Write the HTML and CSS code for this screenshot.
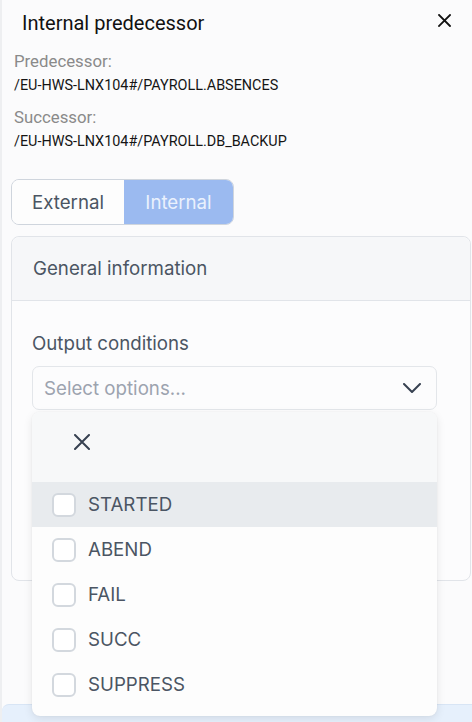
FILE: index.html
```html
<!DOCTYPE html>
<html lang="en">
<head>
<meta charset="utf-8">
<title>Internal predecessor</title>
<link rel="stylesheet" href="styles.css">
</head>
<body>
<div class="page">
  <header class="dlg-head">
    <h1 class="dlg-title">Internal predecessor</h1>
    <button class="close-btn" aria-label="Close">
      <svg width="13" height="13" viewBox="0 0 13 13"><path d="M1 1L12 12M12 1L1 12" stroke="#111" stroke-width="1.8" stroke-linecap="square" fill="none"/></svg>
    </button>
  </header>

  <dl class="meta">
    <div class="meta-item">
      <dt>Predecessor:</dt>
      <dd>/EU-HWS-LNX104#/PAYROLL.ABSENCES</dd>
    </div>
    <div class="meta-item">
      <dt>Successor:</dt>
      <dd>/EU-HWS-LNX104#/PAYROLL.DB_BACKUP</dd>
    </div>
  </dl>

  <div class="seg">
    <button class="seg-btn">External</button>
    <button class="seg-btn seg-active">Internal</button>
  </div>

  <section class="card">
    <div class="card-head">General information</div>
    <div class="card-body">
      <div class="field">
        <label class="field-label">Output conditions</label>
        <div class="select">
          <span class="placeholder">Select options...</span>
          <svg class="chev" width="18" height="10" viewBox="0 0 18 10"><path d="M1 1L9 9L17 1" stroke="#374151" stroke-width="2" fill="none" stroke-linecap="round" stroke-linejoin="round"/></svg>
        </div>
        <div class="menu">
          <div class="menu-top">
            <svg width="16" height="16" viewBox="0 0 16 16"><path d="M1 1L15 15M15 1L1 15" stroke="#374151" stroke-width="2" stroke-linecap="round" fill="none"/></svg>
          </div>
          <ul class="opts">
            <li class="opt opt-hover"><span class="cb"></span>STARTED</li>
            <li class="opt"><span class="cb"></span>ABEND</li>
            <li class="opt"><span class="cb"></span>FAIL</li>
            <li class="opt"><span class="cb"></span>SUCC</li>
            <li class="opt"><span class="cb"></span>SUPPRESS</li>
          </ul>
        </div>
      </div>
    </div>
  </section>

  <div class="footer-strip"></div>
</div>
</body>
</html>
```

FILE: styles.css
```css
html, body {
  margin: 0;
  padding: 0;
  height: 722px;
  overflow: hidden;
  background: #fbfbfc;
}

.page {
  border-left: 2px solid #eeeff1;
  min-height: 722px;
  box-sizing: border-box;
  font-family: Roboto, "Liberation Sans", sans-serif;
}

.dlg-head {
  display: flex;
  justify-content: space-between;
  align-items: flex-start;
  padding: 11px 21px 0 20px;
}

.dlg-title {
  margin: 0;
  font-size: 20px;
  line-height: 24px;
  font-weight: 400;
  color: #111;
}

.close-btn {
  border: 0;
  background: none;
  padding: 0;
  margin-top: 3px;
  width: 13px;
  height: 13px;
  display: flex;
}

.meta {
  margin: 16px 0 0 12px;
  display: flex;
  flex-direction: column;
  gap: 12px;
}

.meta-item dt {
  font-size: 16.8px;
  line-height: 20px;
  color: #8a8a8a;
}

.meta-item dd {
  margin: 6px 0 0 0;
  font-size: 14.4px;
  line-height: 18px;
  color: #151515;
}

.seg {
  margin: 28px 0 0 9px;
  display: inline-flex;
  border: 1px solid #cfd5dd;
  border-radius: 8px;
  overflow: hidden;
  height: 46px;
  box-sizing: border-box;
}

.seg-btn {
  border: 0;
  background: #fdfdfd;
  font-family: Inter, "Liberation Sans", sans-serif;
  font-size: 18.7px;
  color: #4b5563;
  padding: 0;
  width: 112px;
}

.seg-active {
  width: 109px;
  background: #9bbaf0;
  color: #eaf1fd;
}

.card {
  margin: 11px 1px 0 9px;
  border: 1px solid #e1e4e9;
  border-radius: 8px;
  background: #fcfcfd;
  font-family: Inter, "Liberation Sans", sans-serif;
}

.card-head {
  height: 63px;
  display: flex;
  align-items: center;
  padding-left: 21px;
  font-size: 18.7px;
  color: #4b5563;
  background: #f6f7f9;
  border-bottom: 1px solid #e1e4e9;
  border-radius: 8px 8px 0 0;
}

.card-body {
  height: 279px;
  box-sizing: border-box;
  padding: 31px 0 0 20px;
}

.field {
  position: relative;
  width: 405px;
}

.field-label {
  display: block;
  font-size: 18.7px;
  line-height: 24px;
  color: #4b5563;
}

.select {
  margin-top: 10px;
  height: 44px;
  box-sizing: border-box;
  border: 1px solid #e3e6ea;
  border-radius: 7px;
  background: #fcfcfd;
  display: flex;
  align-items: center;
  justify-content: space-between;
  padding: 0 15px 0 11px;
}

.placeholder {
  font-size: 18.7px;
  color: #9ca3af;
}

.menu {
  position: absolute;
  left: 0;
  top: calc(100% + 2px);
  width: 405px;
  background: #fdfdfd;
  border-radius: 8px;
  box-shadow: 0 3px 10px rgba(0, 0, 0, 0.09), 0 0 2px rgba(0, 0, 0, 0.06);
  overflow: hidden;
  z-index: 5;
  padding-bottom: 9px;
}

.menu-top {
  height: 70px;
  box-sizing: border-box;
  padding: 22px 0 0 42px;
  background: #f7f8f9;
}

.opts {
  list-style: none;
  margin: 0;
  padding: 0;
}

.opt {
  height: 45px;
  display: flex;
  align-items: center;
  gap: 12px;
  padding-left: 20px;
  font-size: 18.7px;
  color: #4b5563;
}

.opt-hover {
  background: #e8ebee;
}

.cb {
  width: 24px;
  height: 24px;
  box-sizing: border-box;
  border: 2px solid #d3d8de;
  border-radius: 6px;
  background: #ffffff;
}

.footer-strip {
  margin-top: 123px;
  height: 18px;
  background: #e6f0fc;
  border-top: 1px solid #d8e5f5;
  border-radius: 7px 0 0 0;
}
```
